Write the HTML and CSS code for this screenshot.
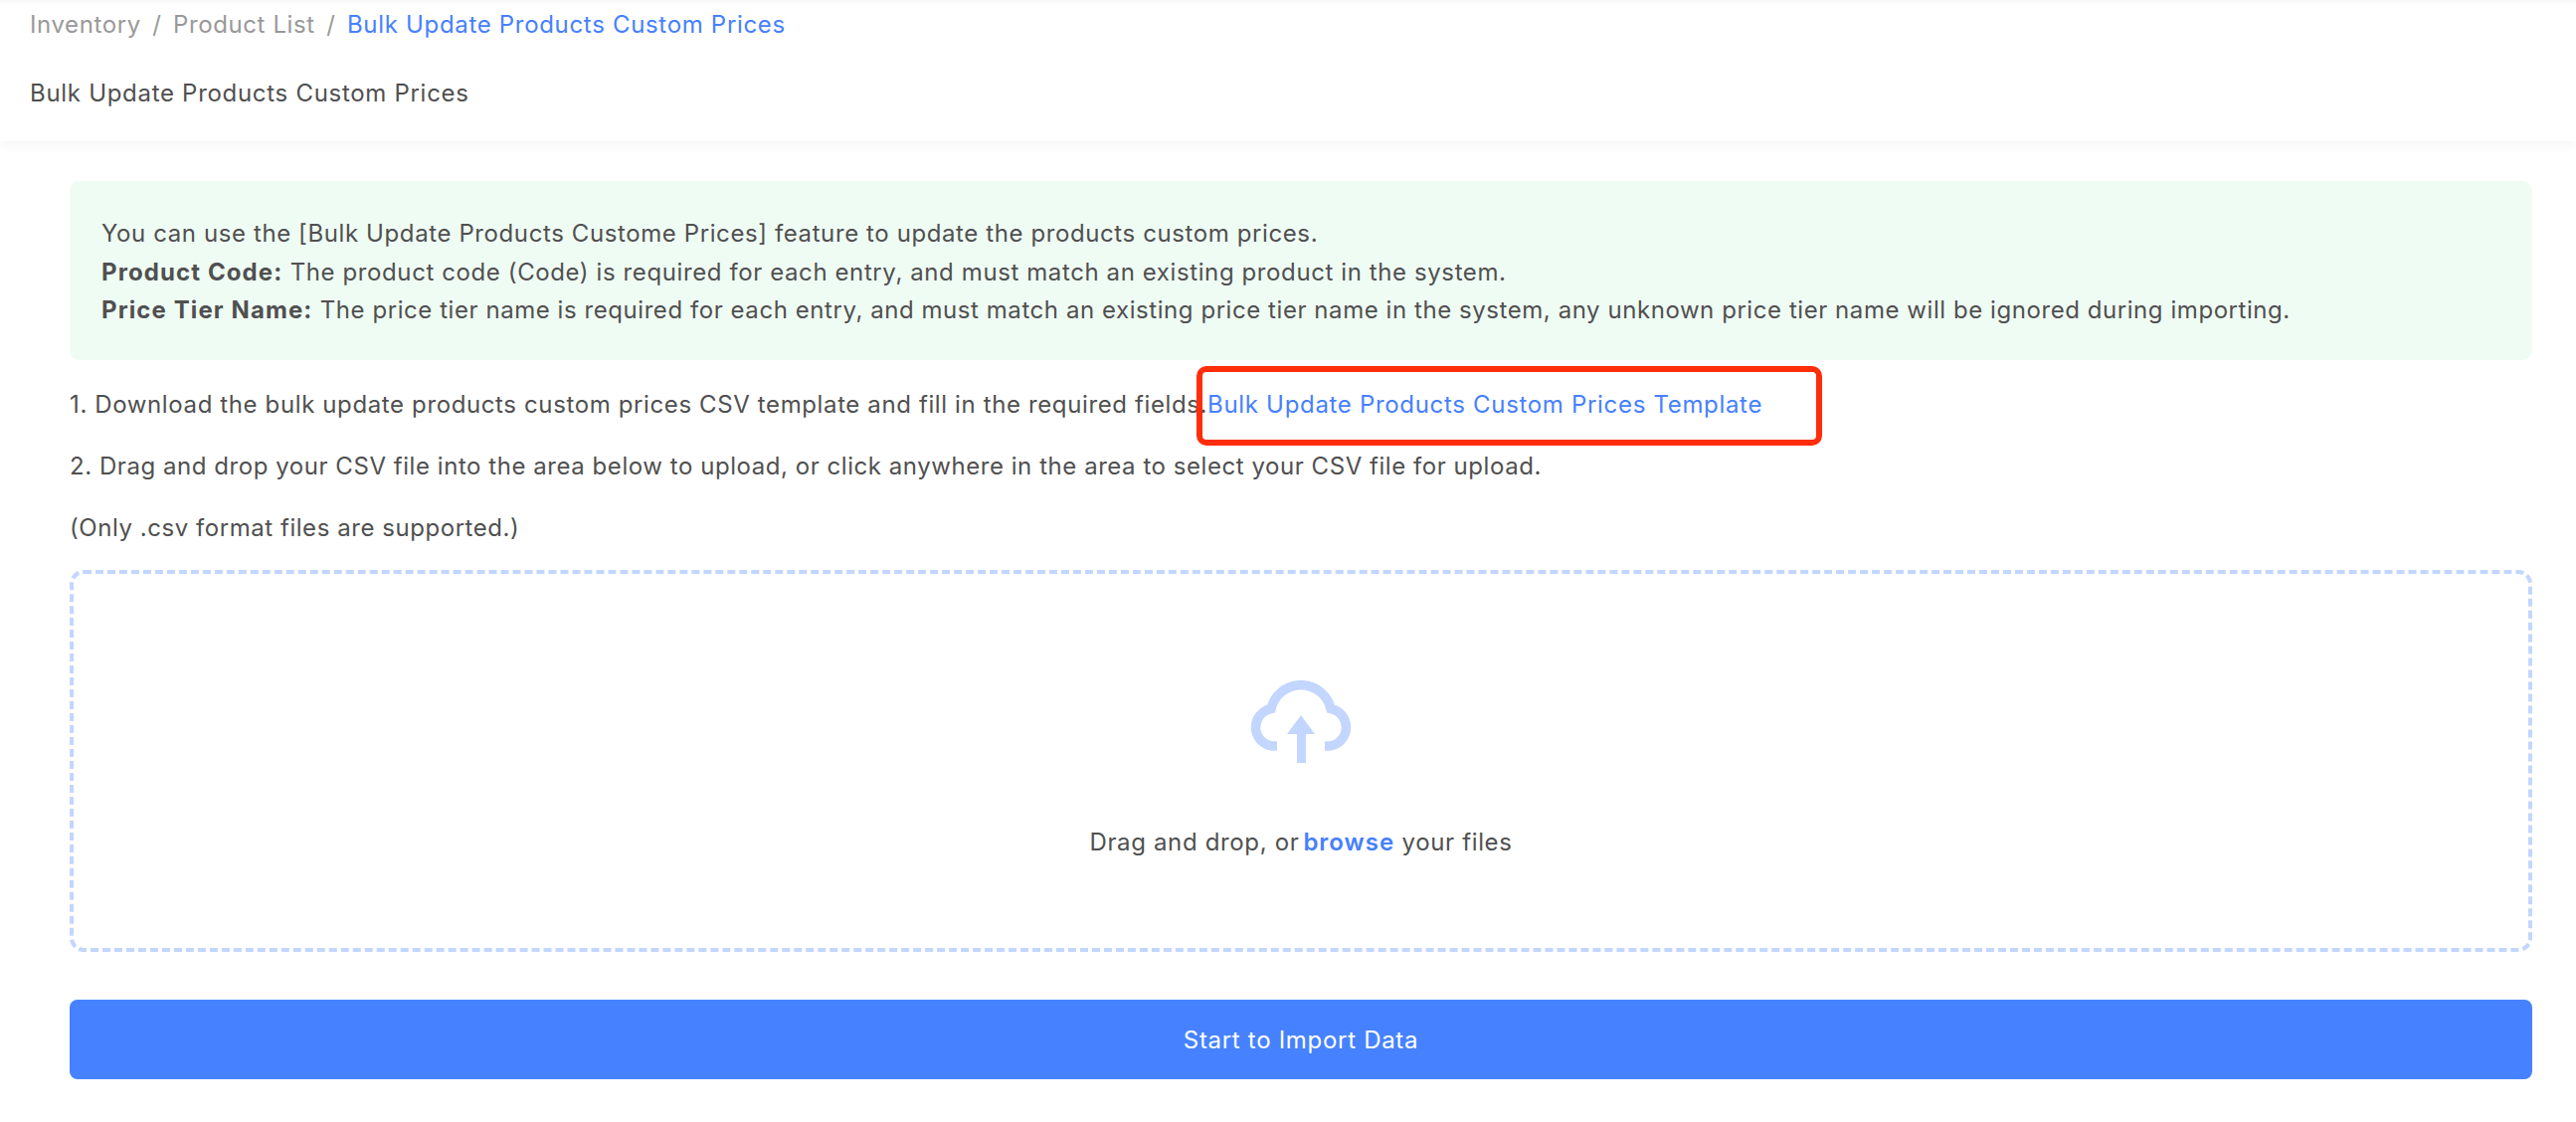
FILE: index.html
```html
<!DOCTYPE html>
<html lang="en">
  <head>
    <meta charset="UTF-8" />
    <meta name="viewport" content="width=device-width, initial-scale=1.0"/>
    <title>Bulk Update Products Custom Prices</title>
    <link rel="stylesheet" href="styles.css">
  </head>
  <body>
    <header class="page-header">
      <nav class="breadcrumb">
        <span>Inventory</span>
        <span class="sep">/</span>
        <span>Product List</span>
        <span class="sep">/</span>
        <span class="current">Bulk Update Products Custom Prices</span>
      </nav>
      <div class="page-title">Bulk Update Products Custom Prices</div>
    </header>

    <main class="content">
      <div class="notice">
        <p>You can use the [Bulk Update Products Custome Prices] feature to update the products custom prices.</p>
        <p><b>Product Code:</b> The product code (Code) is required for each entry, and must match an existing product in the system.</p>
        <p class="tier-line"><b>Price Tier Name:</b> The price tier name is required for each entry, and must match an existing price tier name in the system, any unknown price tier name will be ignored during importing.</p>
      </div>

      <p class="step first-step">1. Download the bulk update products custom prices CSV template and fill in the required fields.<span class="template-wrap"><a class="template-link">Bulk Update Products Custom Prices Template</a><span class="highlight"></span></span></p>
      <p class="step">2. Drag and drop your CSV file into the area below to upload, or click anywhere in the area to select your CSV file for upload.</p>
      <p class="step">(Only .csv format files are supported.)</p>

      <div class="dropzone">
        <svg class="cloud" width="106" height="83" viewBox="0 0 106 83">
          <path d="M29 66H24A19 19 0 0 1 23 28.5A30.8 30.8 0 0 1 83 28.5A19 19 0 0 1 82 66H77" fill="none" stroke="#c2d6ff" stroke-width="9.5"/>
          <path d="M53 35L39 54H49V83H58V54H67Z" fill="#c2d6ff"/>
        </svg>
        <div class="drop-text">Drag and drop, or<b>browse</b> your files</div>
      </div>

      <button type="button" class="import-btn">Start to Import Data</button>
    </main>
  </body>
</html>
```

FILE: styles.css
```css
body {
  font-family: Inter, 'Noto Sans', sans-serif;
  font-size: 24px;
  letter-spacing: 0.6px;
  color: #505050;
  background: white;
  margin: 0;
}

p {
  margin: 0;
}

.page-header {
  height: 142px;
  padding: 0 30px;
  box-sizing: border-box;
  background: linear-gradient(#f8f8f8, white 6px);
  box-shadow: 0 2px 12px rgba(0, 0, 0, 0.05);
}

.breadcrumb {
  display: flex;
  gap: 11.5px;
  height: 48px;
  align-items: center;
  color: #999;
}

.breadcrumb .current {
  color: #4680ff;
  letter-spacing: 0.68px;
}

.page-title {
  margin-top: 22px;
  line-height: 48px;
  letter-spacing: 0.7px;
}

.content {
  padding: 40px 44px 0 70px;
}

.notice {
  height: 180px;
  box-sizing: border-box;
  padding: 34px 32px 0;
  background: #effcf4;
  border-radius: 10px;
  line-height: 38.5px;
  margin-bottom: 26px;
}

.notice b {
  letter-spacing: 1.1px;
}

.tier-line {
  letter-spacing: 0.56px;
}

.step {
  line-height: 38px;
  margin-top: 24px;
  letter-spacing: 0.55px;
}

.first-step {
  letter-spacing: 0.62px;
}

.template-link {
  color: #4680ff;
  letter-spacing: 0.68px;
}

.template-wrap {
  position: relative;
}

.highlight {
  position: absolute;
  left: -11px;
  top: -24px;
  width: 629px;
  height: 80px;
  box-sizing: border-box;
  border: 6px solid #ff2d0a;
  border-radius: 10px;
}

.dropzone {
  height: 384px;
  margin-top: 23px;
  box-sizing: border-box;
  border: 4px dashed #c2d6ff;
  border-radius: 14px;
  display: flex;
  flex-direction: column;
  align-items: center;
  padding-top: 107px;
}

.drop-text {
  margin-top: 61px;
  line-height: 38px;
  letter-spacing: 0.65px;
}

.drop-text b {
  color: #4680ff;
  font-weight: 600;
  margin-left: 4px;
  letter-spacing: 1px;
}

.import-btn {
  display: block;
  width: 100%;
  height: 80px;
  margin-top: 48px;
  background: #4682ff;
  color: white;
  border: none;
  border-radius: 8px;
  font-family: inherit;
  font-size: 24px;
  letter-spacing: 0.7px;
}
```
